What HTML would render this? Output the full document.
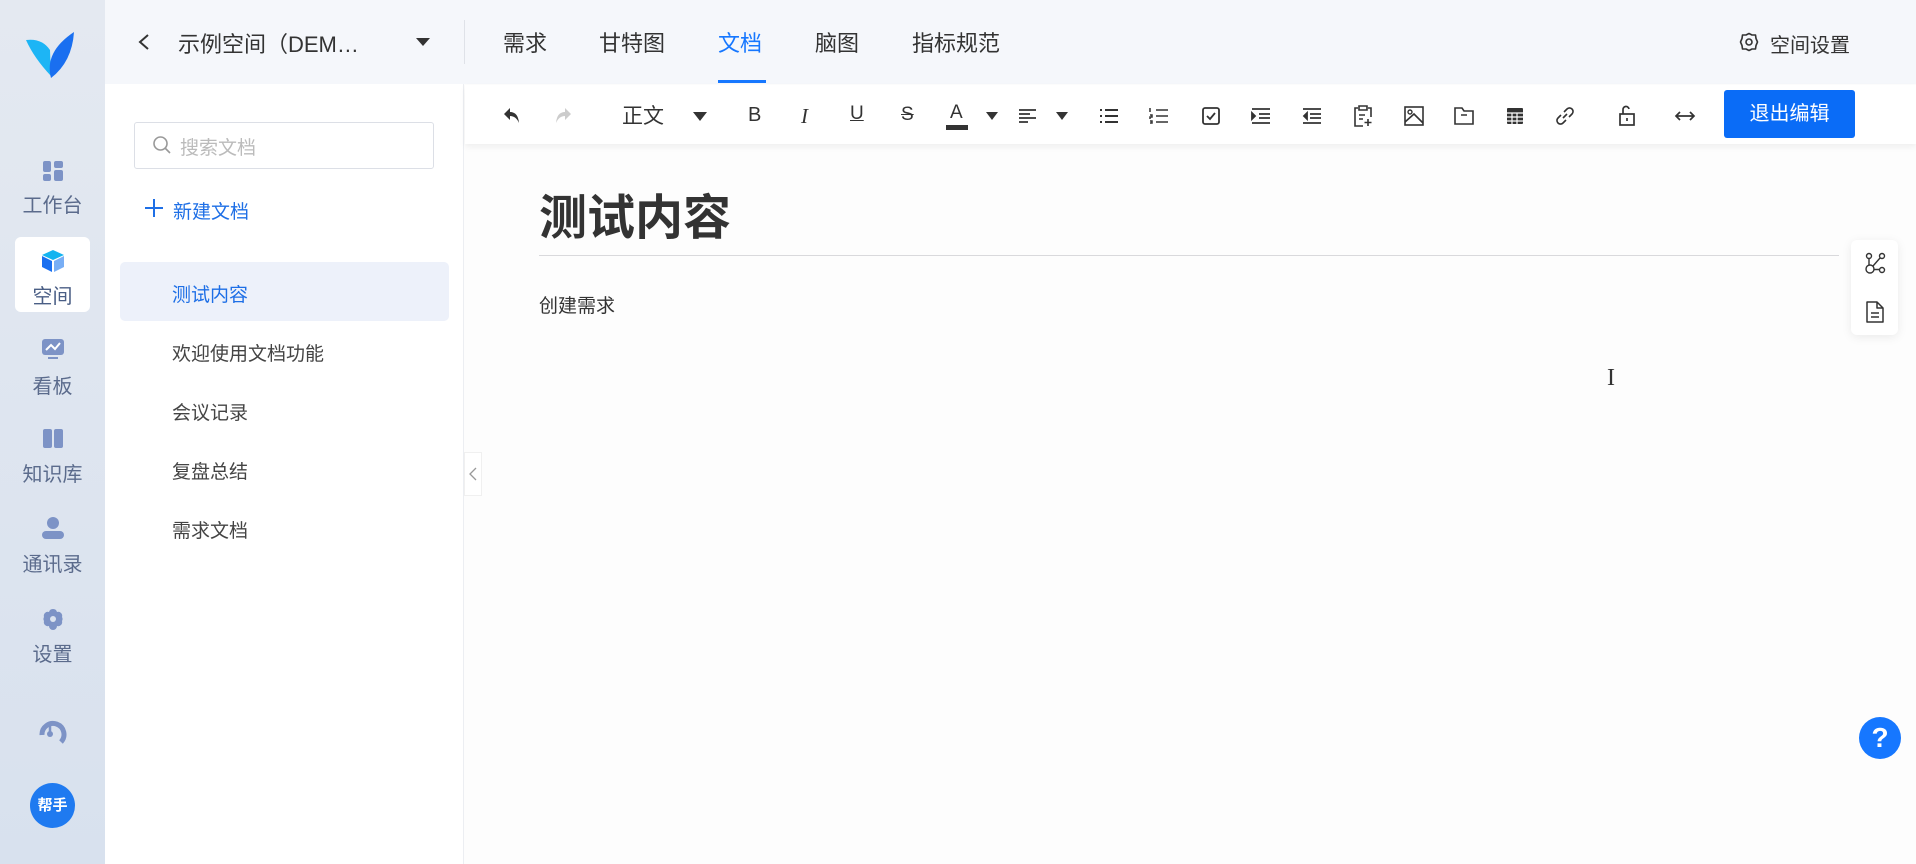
<!DOCTYPE html>
<html><head><meta charset="utf-8"><style>
*{margin:0;padding:0;box-sizing:border-box}
body{width:1916px;height:864px;overflow:hidden;background:#fdfdfd;font-family:"Liberation Sans","Noto Sans CJK SC",sans-serif;position:relative;color:#333}
.abs{position:absolute}
.rail{left:0;top:0;width:105px;height:864px;background:linear-gradient(#e4e9f1,#d8e1ee)}
.ri{position:absolute;left:0;width:105px;text-align:center;color:#5b6b8c;font-size:20px}
.top{left:105px;top:0;width:1811px;height:84px;background:#f5f7fb}
.tab{position:absolute;top:26px;font-size:22px;color:#333}
.side{left:105px;top:84px;width:359px;height:780px;background:#fff;border-right:1px solid #eceef2}
.doc{position:absolute;left:172px;font-size:19px;color:#444}
.tb{left:465px;top:85px;width:1451px;height:59px;background:#fff;box-shadow:0 3px 6px rgba(0,0,0,.06)}
.ic{position:absolute;top:104px;width:24px;height:24px}
</style></head><body>
<div class="abs rail"></div>
<svg class="abs" style="left:26px;top:32px" width="50" height="48" viewBox="0 0 50 48"><path d="M0 8 Q16 6 24 18 L25 44 Q8 26 0 8Z" fill="#1db5f5"/><path d="M25 46 Q18 20 48 0 Q46 30 25 46Z" fill="#1a6ff0"/></svg>
<svg class="abs" style="left:43px;top:161px" width="20" height="20"><rect x="0" y="0" width="8" height="11" rx="2" fill="#7d93c6"/><rect x="11" y="0" width="9" height="7" rx="2" fill="#7d93c6"/><rect x="0" y="13" width="8" height="7" rx="2" fill="#7d93c6"/><rect x="11" y="9" width="9" height="11" rx="2" fill="#7d93c6"/></svg>
<div class="ri" style="top:189px">工作台</div>
<div class="abs" style="left:15px;top:237px;width:75px;height:75px;background:#fff;border-radius:6px"></div>
<svg class="abs" style="left:41px;top:249px" width="24" height="24" viewBox="0 0 24 24"><path d="M12 1 L23 6 L12 11 L1 6Z" fill="#14b4f0"/><path d="M1 7 L11 12 L11 23 L1 18Z" fill="#1a6ff0"/><path d="M13 12 L23 7 L23 18 L13 23Z" fill="#78aef5"/></svg>
<div class="ri" style="top:280px;color:#4a5e85">空间</div>
<svg class="abs" style="left:42px;top:339px" width="22" height="20"><rect x="0" y="0" width="22" height="16" rx="3" fill="#7d93c6"/><path d="M4 11 L9 6 L13 10 L18 4" stroke="#fff" stroke-width="2" fill="none"/><path d="M6 19 L16 19" stroke="#7d93c6" stroke-width="2"/></svg>
<div class="ri" style="top:370px">看板</div>
<svg class="abs" style="left:43px;top:429px" width="20" height="19"><rect x="0" y="0" width="9" height="19" rx="2" fill="#7d93c6"/><rect x="11" y="0" width="9" height="19" rx="2" fill="#7d93c6"/></svg>
<div class="ri" style="top:458px">知识库</div>
<svg class="abs" style="left:41px;top:516px" width="24" height="24"><circle cx="12" cy="7" r="6" fill="#7d93c6"/><rect x="1" y="15" width="22" height="8" rx="4" fill="#7d93c6"/></svg>
<div class="ri" style="top:548px">通讯录</div>
<svg class="abs" style="left:42px;top:608px" width="22" height="22" viewBox="0 0 22 22"><path d="M11 1 a4 4 0 0 1 4 3 a4 4 0 0 1 5 5 a4 4 0 0 1 0 4 a4 4 0 0 1 -5 5 a4 4 0 0 1 -8 0 a4 4 0 0 1 -5 -5 a4 4 0 0 1 0 -4 a4 4 0 0 1 5 -5 a4 4 0 0 1 4 -3Z" fill="#7d93c6"/><circle cx="11" cy="11" r="3" fill="#dbe3ef"/></svg>
<div class="ri" style="top:638px">设置</div>
<svg class="abs" style="left:39px;top:717px" width="28" height="28" viewBox="0 0 28 28"><path d="M3 18 A11 11 0 1 1 22 25" stroke="#7d93c6" stroke-width="5" fill="none"/><circle cx="11" cy="17" r="3" fill="#7d93c6"/><path d="M11 17 L11 8" stroke="#7d93c6" stroke-width="2.5"/></svg>
<div class="abs" style="left:30px;top:783px;width:45px;height:45px;border-radius:50%;background:#1f7af0;color:#fff;font-size:15px;font-weight:bold;text-align:center;line-height:45px">帮手</div>

<div class="abs top"></div>
<svg class="abs" style="left:137px;top:33px" width="14" height="18"><path d="M11 2 L3 9 L11 16" stroke="#333" stroke-width="2" fill="none"/></svg>
<div class="abs" style="left:178px;top:27px;font-size:22px;color:#333">示例空间（DEM…</div>
<svg class="abs" style="left:416px;top:38px" width="14" height="8"><path d="M0 0 L14 0 L7 8Z" fill="#333"/></svg>
<div class="abs" style="left:464px;top:20px;width:1px;height:44px;background:#dfe2e8"></div>
<div class="tab" style="left:503px">需求</div>
<div class="tab" style="left:599px">甘特图</div>
<div class="tab" style="left:718px;color:#1677ff">文档</div>
<div class="abs" style="left:718px;top:80px;width:48px;height:3px;background:#1677ff"></div>
<div class="tab" style="left:815px">脑图</div>
<div class="tab" style="left:912px">指标规范</div>
<svg class="abs" style="left:1739px;top:32px" width="20" height="20" viewBox="0 0 20 20"><circle cx="10" cy="10" r="3" stroke="#333" stroke-width="1.6" fill="none"/><path d="M10 1.5 L13 3 L16.5 3 L17 6.5 L18.5 10 L17 13.5 L16.5 17 L13 17 L10 18.5 L7 17 L3.5 17 L3 13.5 L1.5 10 L3 6.5 L3.5 3 L7 3Z" stroke="#333" stroke-width="1.6" fill="none" stroke-linejoin="round"/></svg>
<div class="abs" style="left:1770px;top:29px;font-size:20px;color:#333">空间设置</div>

<div class="abs side"></div>
<div class="abs" style="left:134px;top:122px;width:300px;height:47px;border:1px solid #dcdfe6;border-radius:3px"></div>
<svg class="abs" style="left:152px;top:135px" width="20" height="20"><circle cx="8.5" cy="8.5" r="6.5" stroke="#999" stroke-width="1.6" fill="none"/><path d="M13.5 13.5 L18 18" stroke="#999" stroke-width="1.6"/></svg>
<div class="abs" style="left:180px;top:133px;font-size:19px;color:#bbb">搜索文档</div>
<svg class="abs" style="left:145px;top:199px" width="18" height="18"><path d="M9 0 V18 M0 9 H18" stroke="#1e6fe6" stroke-width="2"/></svg>
<div class="abs" style="left:173px;top:197px;font-size:19px;color:#1e6fe6">新建文档</div>
<div class="abs" style="left:120px;top:262px;width:329px;height:59px;background:#edf1fa;border-radius:5px"></div>
<div class="doc" style="top:280px;color:#1e6fe6">测试内容</div>
<div class="doc" style="top:339px">欢迎使用文档功能</div>
<div class="doc" style="top:398px">会议记录</div>
<div class="doc" style="top:457px">复盘总结</div>
<div class="doc" style="top:516px">需求文档</div>
<div class="abs" style="left:464px;top:452px;width:18px;height:44px;background:#fff;border:1px solid #f0f0f0"></div>
<svg class="abs" style="left:468px;top:466px" width="10" height="16"><path d="M8 2 L2 8 L8 14" stroke="#999" stroke-width="1.3" fill="none"/></svg>

<div class="abs tb"></div>
<svg class="ic" style="left:500px" viewBox="0 0 24 24"><path d="M4 10 L10 4 V8 Q18 8 19 19 Q16 12 10 12 V16Z" fill="#333"/></svg>
<svg class="ic" style="left:551px" viewBox="0 0 24 24"><path d="M20 10 L14 4 V8 Q6 8 5 19 Q8 12 14 12 V16Z" fill="#ccc"/></svg>
<div class="abs" style="left:622px;top:100px;font-size:21px;color:#333">正文</div>
<svg class="abs" style="left:693px;top:112px" width="14" height="9"><path d="M0 0 H14 L7 9Z" fill="#333"/></svg>
<div class="abs" style="left:748px;top:104px;font-size:20px;color:#333">B</div>
<div class="abs" style="left:801px;top:104px;font-size:21px;color:#333;font-style:italic;font-family:'Liberation Serif',serif">I</div>
<div class="abs" style="left:850px;top:103px;font-size:19px;color:#333;text-decoration:underline">U</div>
<div class="abs" style="left:901px;top:104px;font-size:19px;color:#333;text-decoration:line-through">S</div>
<div class="abs" style="left:950px;top:102px;font-size:19px;color:#333">A</div>
<div class="abs" style="left:946px;top:125px;width:22px;height:5px;background:#333"></div>
<svg class="abs" style="left:986px;top:112px" width="12" height="8"><path d="M0 0 H12 L6 8Z" fill="#333"/></svg>
<svg class="ic" style="left:1016px" viewBox="0 0 24 24"><path d="M3 6 H20 M3 10 H14 M3 14 H20 M3 18 H12" stroke="#333" stroke-width="1.8"/></svg>
<svg class="abs" style="left:1056px;top:112px" width="12" height="8"><path d="M0 0 H12 L6 8Z" fill="#333"/></svg>
<svg class="ic" style="left:1097px" viewBox="0 0 24 24"><path d="M3 6 H5 M3 12 H5 M3 18 H5 M8 6 H21 M8 12 H21 M8 18 H21" stroke="#333" stroke-width="2"/></svg>
<svg class="ic" style="left:1147px" viewBox="0 0 24 24"><path d="M9 6 H21 M9 12 H21 M9 18 H21 M3 4 V8 M3 11 H5 V13 H3 V15 M3 17 H5 V19 H3" stroke="#333" stroke-width="1.5" fill="none"/></svg>
<svg class="ic" style="left:1199px" viewBox="0 0 24 24"><rect x="4" y="4" width="16" height="16" rx="2" stroke="#333" stroke-width="1.8" fill="none"/><path d="M8 12 L11 15 L16 9" stroke="#333" stroke-width="1.8" fill="none"/></svg>
<svg class="ic" style="left:1249px" viewBox="0 0 24 24"><path d="M3 5 H21 M10 10 H21 M10 14 H21 M3 19 H21 M3 9 L6 12 L3 15Z" stroke="#333" stroke-width="1.8" fill="#333"/></svg>
<svg class="ic" style="left:1300px" viewBox="0 0 24 24"><path d="M3 5 H21 M10 10 H21 M10 14 H21 M3 19 H21 M7 9 L4 12 L7 15Z" stroke="#333" stroke-width="1.8" fill="#333"/></svg>
<svg class="ic" style="left:1351px" viewBox="0 0 24 24"><path d="M7 4 H4 V22 H12 M17 4 H20 V13 M8 2 H16 V6 H8Z M8 11 H14 M8 15 H12 M17 15 V22 M13.5 18.5 H20.5" stroke="#333" stroke-width="1.6" fill="none"/></svg>
<svg class="ic" style="left:1402px" viewBox="0 0 24 24"><rect x="3" y="3" width="18" height="18" stroke="#333" stroke-width="1.6" fill="none"/><circle cx="8" cy="8" r="2" stroke="#333" stroke-width="1.4" fill="none"/><path d="M3 18 L12 10 L21 19" stroke="#333" stroke-width="1.6" fill="none"/></svg>
<svg class="ic" style="left:1452px" viewBox="0 0 24 24"><path d="M3 4 H10 L12 7 H21 V20 H3Z M9 11 H15" stroke="#333" stroke-width="1.6" fill="none"/></svg>
<svg class="ic" style="left:1503px" viewBox="0 0 24 24"><rect x="4" y="4" width="16" height="16" rx="1" fill="#333"/><path d="M4 9 H20 M4 13 H20 M4 17 H20 M9 9 V20 M14 9 V20" stroke="#fff" stroke-width="1.2"/></svg>
<svg class="ic" style="left:1553px" viewBox="0 0 24 24"><path d="M10 14 L14 10 M8 11 L5 14 A3 3 0 0 0 10 19 L13 16 M16 13 L19 10 A3 3 0 0 0 14 5 L11 8" stroke="#333" stroke-width="1.6" fill="none"/></svg>
<svg class="ic" style="left:1615px" viewBox="0 0 24 24"><rect x="5" y="10" width="14" height="11" stroke="#333" stroke-width="1.7" fill="none"/><path d="M8 10 V6 A3 3 0 0 1 14 5" stroke="#333" stroke-width="1.7" fill="none"/><path d="M12 14 V17" stroke="#333" stroke-width="1.7"/></svg>
<svg class="ic" style="left:1673px" viewBox="0 0 24 24"><path d="M3 12 H21 M7 8 L3 12 L7 16 M17 8 L21 12 L17 16" stroke="#333" stroke-width="1.7" fill="none"/></svg>
<div class="abs" style="left:1724px;top:90px;width:131px;height:48px;background:#0a6cf7;border-radius:3px;color:#fff;font-size:20px;text-align:center;line-height:48px">退出编辑</div>

<div class="abs" style="left:539px;top:178px;font-size:48px;font-weight:bold;color:#333">测试内容</div>
<div class="abs" style="left:539px;top:255px;width:1300px;height:1px;background:#d9d9dc"></div>
<div class="abs" style="left:539px;top:291px;font-size:19px;color:#333">创建需求</div>
<div class="abs" style="left:1607px;top:365px;font-size:24px;color:#333;font-family:'Liberation Serif',serif">I</div>

<div class="abs" style="left:1851px;top:240px;width:47px;height:95px;background:#fff;border-radius:6px;box-shadow:0 2px 10px rgba(0,0,0,.08)"></div>
<svg class="abs" style="left:1863px;top:252px" width="24" height="24" viewBox="0 0 24 24"><circle cx="6" cy="4" r="2.5" stroke="#333" stroke-width="1.4" fill="none"/><circle cx="19" cy="4" r="2.5" stroke="#333" stroke-width="1.4" fill="none"/><circle cx="7" cy="17" r="4" stroke="#333" stroke-width="1.4" fill="none"/><circle cx="19" cy="18" r="2.5" stroke="#333" stroke-width="1.4" fill="none"/><path d="M6 7 V13 M17 6 L10 14 M11 17.5 H16.5" stroke="#333" stroke-width="1.4"/></svg>
<svg class="abs" style="left:1864px;top:300px" width="22" height="24" viewBox="0 0 22 24"><path d="M3 2 H13 L19 8 V22 H3Z M13 2 V8 H19 M7 13 H15 M7 17 H15" stroke="#333" stroke-width="1.5" fill="none" stroke-linejoin="round"/></svg>
<div class="abs" style="left:1859px;top:717px;width:42px;height:42px;border-radius:50%;background:#1677ff;color:#fff;font-size:28px;font-weight:bold;text-align:center;line-height:42px">?</div>
</body></html>
